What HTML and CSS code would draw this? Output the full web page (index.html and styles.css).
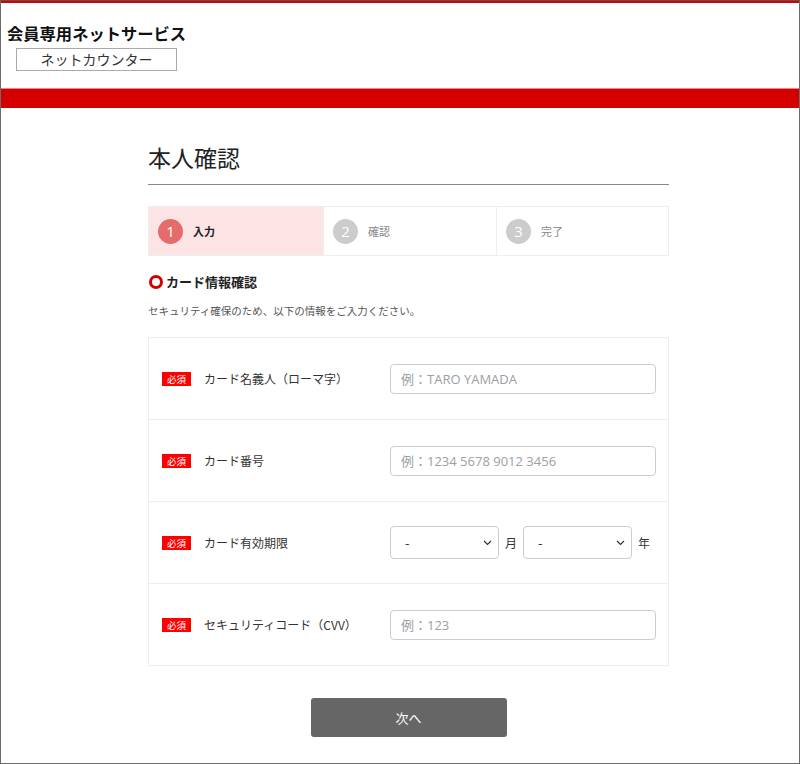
FILE: index.html
```html
<!DOCTYPE html>
<html lang="ja">
<head>
<meta charset="utf-8">
<link rel="stylesheet" href="styles.css">
</head>
<body>
<div class="frame">
  <header class="site-header">
    <h1 class="site-title">会員専用ネットサービス</h1>
    <div class="counter-btn">ネットカウンター</div>
  </header>
  <div class="red-band"></div>
  <main class="content">
    <h2 class="page-title">本人確認</h2>
    <ol class="steps">
      <li class="step active"><span class="num">1</span><span class="lbl">入力</span></li>
      <li class="step"><span class="num">2</span><span class="lbl">確認</span></li>
      <li class="step"><span class="num">3</span><span class="lbl">完了</span></li>
    </ol>
    <h3 class="section-title"><span class="ring"></span>カード情報確認</h3>
    <p class="desc">セキュリティ確保のため、以下の情報をご入力ください。</p>
    <div class="form-table">
      <div class="row">
        <div class="label"><span class="req">必須</span>カード名義人（ローマ字）</div>
        <div class="field"><input class="text" type="text" placeholder="例：TARO YAMADA"></div>
      </div>
      <div class="row">
        <div class="label"><span class="req">必須</span>カード番号</div>
        <div class="field"><input class="text" type="text" placeholder="例：1234 5678 9012 3456"></div>
      </div>
      <div class="row">
        <div class="label"><span class="req">必須</span>カード有効期限</div>
        <div class="field">
          <div class="sel"><span>-</span><svg width="9" height="6" viewBox="0 0 9 6"><path d="M1 1l3.5 3.5L8 1" fill="none" stroke="#333" stroke-width="1.2"/></svg></div>
          <span class="unit">月</span>
          <div class="sel"><span>-</span><svg width="9" height="6" viewBox="0 0 9 6"><path d="M1 1l3.5 3.5L8 1" fill="none" stroke="#333" stroke-width="1.2"/></svg></div>
          <span class="unit">年</span>
        </div>
      </div>
      <div class="row">
        <div class="label"><span class="req">必須</span>セキュリティコード（CVV）</div>
        <div class="field"><input class="text" type="text" placeholder="例：123"></div>
      </div>
    </div>
    <div class="actions"><button class="next">次へ</button></div>
  </main>
</div>
</body>
</html>
```
FILE: styles.css
```css
* { box-sizing: border-box; }
html, body { margin: 0; padding: 0; }
body {
  font-family: "Noto Sans CJK JP", "Noto Sans", sans-serif;
  color: #333;
  background: #fff;
}
.frame {
  width: 800px;
  height: 764px;
  border: 1px solid #6b6b6b;
  border-top: 1px solid #555;
  overflow: hidden;
}
.site-header {
  border-top: 2px solid #d40000;
  height: 87px;
  padding: 18px 0 0 6px;
}
.site-title {
  margin: 0;
  font-family: "Noto Sans CJK JP", sans-serif;
  font-size: 16.3px;
  font-weight: 700;
  line-height: 24px;
  color: #111;
}
.counter-btn {
  margin: 3px 0 0 9px;
  width: 161px;
  height: 23px;
  border: 1px solid #aaa;
  background: #fff;
  font-size: 14px;
  line-height: 21px;
  text-align: center;
  color: #333;
}
.red-band {
  height: 20px;
  background: #d40000;
  border-top: 1px solid #e88;
}
.content {
  width: 521px;
  margin-left: 147px;
  padding-top: 33px;
}
.page-title {
  margin: 0;
  font-size: 23px;
  font-weight: 400;
  line-height: 32px;
  color: #222;
  padding-bottom: 11px;
  border-bottom: 1px solid #888;
}
.steps {
  list-style: none;
  margin: 21px 0 0;
  padding: 0;
  display: grid;
  grid-template-columns: 174px 173px 174px;
  height: 50px;
  border: 1px solid #eee;
}
.step {
  display: flex;
  align-items: center;
  padding-left: 9px;
  border-left: 1px solid #eee;
}
.step:first-child { border-left: none; }
.step.active { background: #fde4e4; }
.num {
  width: 25px;
  height: 25px;
  border-radius: 50%;
  background: #ccc;
  color: #fff;
  font-family: "Open Sans", "Noto Sans", sans-serif;
  font-size: 15px;
  line-height: 25px;
  text-align: center;
}
.active .num { background: #e66b6b; }
.lbl {
  margin-left: 10px;
  font-size: 11px;
  color: #888;
}
.active .lbl { color: #222; font-weight: 700; }
.section-title {
  margin: 16px 0 0;
  display: flex;
  align-items: center;
  font-size: 13px;
  font-weight: 700;
  color: #222;
  line-height: 20px;
}
.ring {
  width: 14px;
  height: 14px;
  border: 3px solid #d40000;
  border-radius: 50%;
  margin: 0 3px 0 1px;
}
.desc {
  margin: 11px 0 0;
  font-size: 10.5px;
  line-height: 16px;
  color: #555;
}
.form-table {
  margin-top: 18px;
  border: 1px solid #eee;
}
.row {
  display: flex;
  align-items: center;
  height: 82px;
  border-top: 1px solid #eee;
}
.row:first-child { border-top: none; height: 81px; }
.label {
  width: 241px;
  padding-left: 13px;
  display: flex;
  align-items: center;
  font-size: 12px;
  color: #333;
}
.req {
  display: inline-block;
  width: 29px;
  height: 14px;
  background: #f00;
  color: #fff;
  font-size: 9.5px;
  line-height: 14px;
  text-align: center;
  margin-right: 13px;
}
.field {
  display: flex;
  align-items: center;
}
.text {
  width: 266px;
  height: 30px;
  border: 1px solid #ccc;
  border-radius: 4px;
  padding: 0 10px;
  font-family: "Open Sans", "Noto Sans CJK JP", sans-serif;
  font-size: 13px;
  color: #333;
  outline: none;
}
.text::placeholder { color: #9aa0a6; }
.sel {
  width: 109px;
  height: 33px;
  border: 1px solid #ccc;
  border-radius: 4px;
  display: flex;
  align-items: center;
  justify-content: space-between;
  padding: 0 6px 0 14px;
  font-size: 13px;
}
.unit {
  font-size: 12px;
  margin: 0 6px;
  color: #333;
}
.actions {
  display: flex;
  justify-content: center;
  margin-top: 32px;
}
.next {
  width: 196px;
  height: 39px;
  border: none;
  border-radius: 3px;
  background: #666;
  color: #fff;
  font-family: "Noto Sans CJK JP", sans-serif;
  font-size: 13px;
}
```
